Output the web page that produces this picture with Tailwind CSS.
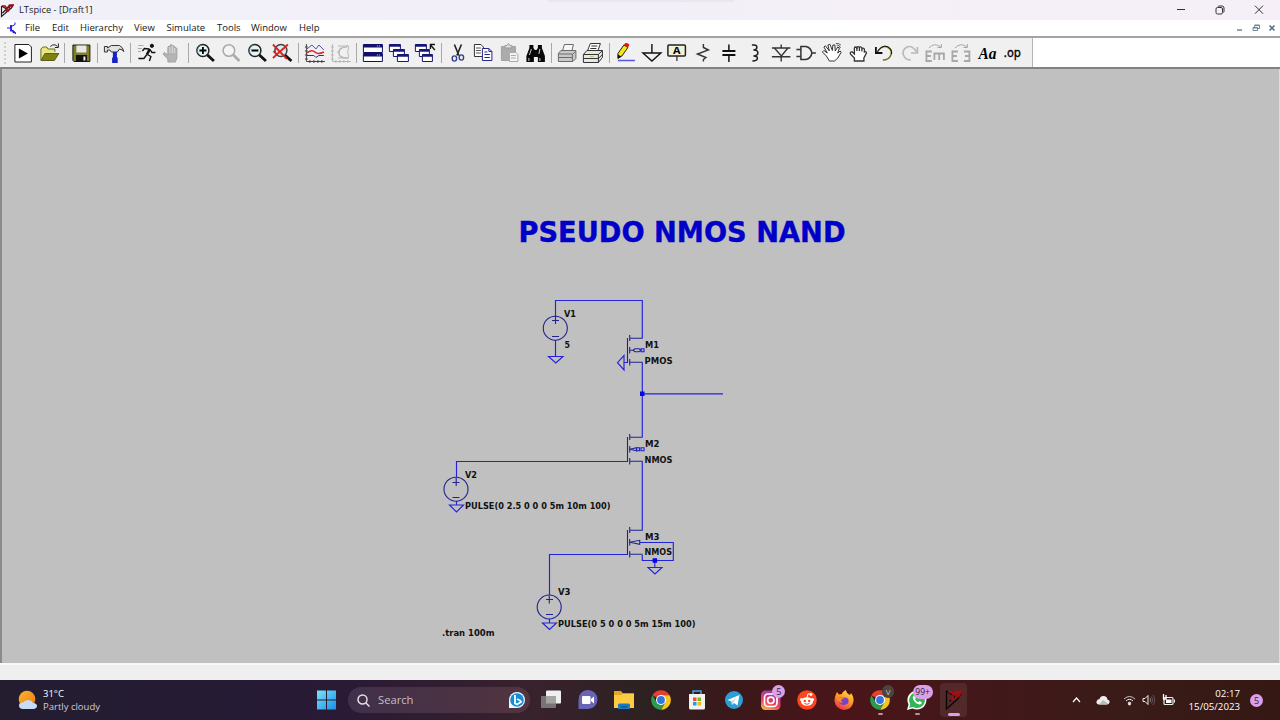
<!DOCTYPE html>
<html lang="en">
<head>
<meta charset="utf-8">
<title>LTspice - [Draft1]</title>
<script src="https://cdn.jsdelivr.net/npm/@tailwindcss/browser@4"></script>
</head>
<body class="w-[1280px] h-[720px] overflow-hidden flex flex-col bg-white text-black font-['Open_Sans','Noto_Sans',sans-serif]">

<!-- Title bar -->
<header class="h-5 shrink-0 flex items-center bg-linear-to-r from-[#f1f0f8] via-[#f3eff8] to-[#f6eff7] relative">
  <svg class="w-[15px] h-[16px] shrink-0" viewBox="0 0 15 16" fill="none"><path d="M1.500 4v10.500L11.500 6l1.500-3.500M1.500 4l5 3-4 4" stroke="#2b1719" stroke-width="1.200"/><path d="M2 4h3l2 2.500L9.500 3H14M7.500 6.500L6.500 9.500l2-.5L10 4h2.500L11 6.500" stroke="#8e101c" stroke-width="1.400"/></svg>
  <span class="ml-[4px] text-[9.300px] leading-4 text-[#1b1b1b] whitespace-nowrap w-[74px]">LTspice - [Draft1]</span>
  <div class="absolute left-[547px] top-0 w-[187px] h-[2px] bg-[#e7e7ec] rounded-b"></div>
  <div class="ml-auto flex items-center gap-[29px] mr-[16px]">
    <svg class="w-[10px] h-[10px]" viewBox="0 0 10 10"><path d="M1 4.500h8" stroke="#333" fill="none"/></svg>
    <svg class="w-[10px] h-[10px]" viewBox="0 0 10 10" fill="none" stroke="#333"><rect x="1" y="2.500" width="6.500" height="6.500" rx="1.500"/><path d="M3 1.500Q3 1 4 1h3q2 0 2 2v3.500q0 .8-.7 1"/></svg>
    <svg class="w-[10px] h-[10px]" viewBox="0 0 10 10"><path d="M1 .7l8 8M9 .7l-8 8" stroke="#333" fill="none"/></svg>
  </div>
</header>

<!-- Menu bar -->
<nav class="h-4 shrink-0 flex items-center bg-white text-[9.500px] leading-4 text-[#161616] whitespace-nowrap">
  <svg class="w-[11px] h-[13px] ml-[6px] mr-[8px]" viewBox="0 0 11 13" fill="none" stroke="#1717e8"><path d="M1 6h4M9 .500v2L5.500 4.500M9.500 12v-1.500L5.500 8"/><path d="M5 3v6.500" stroke-width="1.800"/><path d="M6.500 8l1 2.500h1.500" stroke-width="1.600"/></svg>
  <div class="flex -mt-px"><span class="w-[27px]">File</span><span class="w-[28px]">Edit</span><span class="w-[54px]">Hierarchy</span><span class="w-[32.500px]">View</span><span class="w-[50.500px]">Simulate</span><span class="w-[34px]">Tools</span><span class="w-[48px]">Window</span><span>Help</span></div>
  <div class="ml-auto mr-[4px] flex items-center gap-[8px]">
    <svg class="w-[8px] h-[8px]" viewBox="0 0 8 8"><path d="M1 6h5" stroke="#6f8494" stroke-width="1.500"/></svg>
    <svg class="w-[8px] h-[8px]" viewBox="0 0 8 8" fill="none" stroke="#6f8494"><path d="M2.500 3V1.500h5v3H6M2.500 1h5"/><path d="M1 3.500h4.500v3H1zM1 4h4.500"/></svg>
    <svg class="w-[8px] h-[8px]" viewBox="0 0 8 8"><path d="M1.500 1.500l5 5M6.500 1.500l-5 5" stroke="#5f7585" stroke-width="1.700"/></svg>
  </div>
</nav>

<!-- Toolbar -->
<div class="h-[33px] shrink-0 border-t-2 border-b-2 border-t-[#a3a3a3] border-b-[#828282] flex bg-white">
  <div class="w-[1033px] h-full flex items-center bg-[#f0f0f0] border-r border-[#b5b5b5] pl-[4px] [&>svg]:w-[25.800px] [&>svg]:h-[24px] [&>svg]:shrink-0 [&>i]:w-px [&>i]:h-[20px] [&>i]:bg-[#a9a9a9] [&>i]:mx-[2.900px] [&>i]:shrink-0">
    <div class="w-[2px] h-[22px] border-l-2 border-dotted border-[#cfcfcf] mr-[4px] shrink-0"></div>
    <!-- run -->
    <svg viewBox="0 0 24 24"><path d="M4 3.500h14l2.500 2.500v15H4z" fill="#fff" stroke="#222"/><path d="M8 7.500v10l9-5z" fill="#000"/></svg>
    <!-- open -->
    <svg viewBox="0 0 24 24"><path d="M4 19V8l2-2h4l1 2h7v3" fill="#e8e682" stroke="#6a6e22"/><path d="M4 19.500l4-7h14l-4.500 7z" fill="#7f8010" stroke="#5d5f18"/><path d="M13.500 5.500q4-3.500 7 0M21.500 2.500V6.500H18" fill="none" stroke="#222"/></svg>
    <i></i>
    <!-- save -->
    <svg viewBox="0 0 24 24"><path d="M4 4h17v16.500H5L4 19.500z" fill="#80802a" stroke="#1c1c08"/><path d="M7.500 4.500h10v7h-10z" fill="#e8e8e8"/><path d="M7 14h11v6.500H7z" fill="#111"/><path d="M14.500 15.500h2v4h-2z" fill="#eee"/></svg>
    <i></i>
    <!-- hammer -->
    <svg viewBox="0 0 24 24"><path d="M2.500 5.500h3v1.500l4-2.500h8q3.500 1.500 4.500 6-1.500-2-4.500-2.500l-2 3h-6L8 9H5.500v2h-3z" fill="#e2e2e2" stroke="#333"/><path d="M11 11h4v5l.8 1v5h-5.600v-5l.8-1z" fill="#1522c5"/></svg>
    <i></i>
    <!-- runner -->
    <svg viewBox="0 0 24 24" fill="none" stroke="#111"><circle cx="17" cy="4.800" r="1.600" fill="#111"/><path d="M15 8l-3 5.500" stroke-width="2.600"/><path d="M14.500 8L9.500 7.500 7.500 10M15.500 9l1.500 2.500h3.500M12.500 13.500l3.500 2-1.500 4.500M12 13.500l-3 4H3.500" stroke-width="1.400"/><path d="M3.500 4.500h5M3 7.500h4M3 10.500h3" stroke="#888" stroke-width=".7"/></svg>
    <!-- halt hand -->
    <svg viewBox="0 0 24 24"><path d="M8 21v-3l-5-5 1.500-1.500L8 14V6q1-2 2 0v-1.500q1.200-2 2.400 0V5q1.200-1.500 2.300.5V7q1.500-1.300 2.300.5v9L15.500 21z" fill="#b4b4b4" stroke="#a2a2a2"/><path d="M10 6v6M12.400 5v7M14.700 7v5" stroke="#eee" stroke-width=".7"/></svg>
    <i></i>
    <!-- zoom in -->
    <svg viewBox="0 0 24 24" fill="none"><circle cx="10" cy="9.500" r="6" fill="#e4f3f3" stroke="#222" stroke-width="1.500"/><path d="M5 12A6 6 0 0 1 8.500 4" stroke="#219b9b"/><path d="M14.500 14l6.500 6" stroke="#111" stroke-width="2.800"/><path d="M6.500 9.500h7M10 6v7" stroke="#000" stroke-width="1.800"/></svg>
    <!-- pan -->
    <svg viewBox="0 0 24 24" fill="none"><circle cx="10" cy="9.500" r="5.800" fill="#f4f4f4" stroke="#aaa" stroke-width="1.500"/><path d="M14.500 14l6 6" stroke="#aaa" stroke-width="2.600"/></svg>
    <!-- zoom out -->
    <svg viewBox="0 0 24 24" fill="none"><circle cx="10" cy="9.500" r="6" fill="#e4f3f3" stroke="#222" stroke-width="1.500"/><path d="M5 12A6 6 0 0 1 8.500 4" stroke="#219b9b"/><path d="M14.500 14l6.500 6" stroke="#111" stroke-width="2.800"/><path d="M6.500 9.500h7" stroke="#000" stroke-width="2"/></svg>
    <!-- zoom fit -->
    <svg viewBox="0 0 24 24" fill="none"><circle cx="11" cy="9.500" r="6" fill="#dcecec" stroke="#444" stroke-width="1.500"/><path d="M15 14l6.500 6" stroke="#111" stroke-width="2.800"/><path d="M3 3.500L17 18M18 3.500L3 17M3.500 10l4 4" stroke="#e02020" stroke-width="1.800"/></svg>
    <i></i>
    <!-- waveform -->
    <svg viewBox="0 0 24 24" fill="none"><path d="M3.500 3v17.500H22M2 6h3M2 10h3M2 14h3M2 18h3M7 19v3M11 19v3M15 19v3M19 19v3" stroke="#444"/><path d="M4 8l5-4 4 4 3-4 5 5" stroke="#5050b0"/><path d="M4 12q5-4 8-1t9 0" stroke="#e02030" stroke-width="1.500"/><path d="M4 14.500h7l2 2 3-2h5" stroke="#283090"/></svg>
    <svg viewBox="0 0 24 24" fill="none" stroke="#b8b8b8"><path d="M3.500 3v17.500H22M2 6h3M2 10h3M2 14h3M2 18h3M7 19v3M11 19v3M15 19v3M19 19v3M8 11h3M9 5h11M9 17h11M18 4l2 3-1 2v4l1 2-2 3"/><path d="M18 6q-8 0-8 5.500T18 17" stroke-width="1.500"/></svg>
    <i></i>
    <!-- tile -->
    <svg viewBox="0 0 24 24"><path d="M2.500 3.500h19v8h-19zM2.500 12.500h19v8h-19z" fill="#fff" stroke="#11116c"/><path d="M2.500 3.500h19v3h-19zM2.500 12.500h19v3h-19z" fill="#11116c"/><path d="M16 5h4M16 14h4" stroke="#ccc" stroke-dasharray="1"/></svg>
    <!-- cascade -->
    <svg viewBox="0 0 24 24" stroke="#171777"><g fill="#fff"><path d="M2.500 3.500h11v7h-11z"/><path d="M2.500 4.500h11" stroke-width="2.500"/><path d="M6.500 8.500h11v7h-11z"/><path d="M6.500 9.500h11" stroke-width="2.500"/><path d="M10.500 13.500h11v7h-11z"/><path d="M10.500 14.500h11" stroke-width="2.500"/></g></svg>
    <!-- close all -->
    <svg viewBox="0 0 24 24" stroke="#171777"><g fill="#fff"><path d="M2.500 3.500h11v7h-11z"/><path d="M2.500 4.500h11" stroke-width="2.500"/><path d="M6.500 8.500h10v7h-10z"/><path d="M6.500 9.500h10" stroke-width="2.500"/><path d="M9.500 13.500h10v7h-10z"/><path d="M9.500 14.500h10" stroke-width="2.500"/></g><path d="M22 9l-4.500-5M17.500 8V3.500H22" fill="none" stroke="#111" stroke-width="1.300"/></svg>
    <i></i>
    <!-- cut -->
    <svg viewBox="0 0 24 24" fill="none"><path d="M9.500 3.500l4.500 11M16.500 3.500l-4.500 11" stroke="#222" stroke-width="1.600"/><ellipse cx="9.500" cy="17.500" rx="2.200" ry="2.600" stroke="#33418f" stroke-width="1.400"/><ellipse cx="16.500" cy="16.500" rx="2.200" ry="2.600" stroke="#33418f" stroke-width="1.400"/></svg>
    <!-- copy -->
    <svg viewBox="0 0 24 24" fill="#fff"><path d="M3.500 3.500H10l2.500 2.500v9.500h-9z" stroke="#333"/><path d="M5 7h5M5 9.500h5M5 12h5" stroke="#555"/><path d="M11.500 7.500H18l3 3v9h-9.500z" stroke="#26268b"/><path d="M18 7.500v3h3M13.500 11h3M13.500 13.500h5.500M13.500 16.500h5.500" fill="none" stroke="#26268b"/></svg>
    <!-- paste -->
    <svg viewBox="0 0 24 24"><path d="M4.500 5.500h14v14h-14z" fill="#ababab" stroke="#a1a1a1"/><path d="M8 7V4.500h2l1.500-2 1.500 2h2V7z" fill="#ddd" stroke="#999"/><path d="M12.500 11.500h6.500l2 2v7h-8.500z" fill="#f4f4f4" stroke="#aaa"/><path d="M14 14.500h5M14 17h5" stroke="#aaa"/></svg>
    <!-- find -->
    <svg viewBox="0 0 24 24"><path d="M6.500 4h4v3l1.500 2h1.500L15 7V4h4v3l3 8v6h-7v-5h-4v5H3.500v-6l3-8z" fill="#080808"/><path d="M8.500 8l-2 6M17 8l-1 5M6 17v3M17 17v3" stroke="#ccc"/></svg>
    <i></i>
    <!-- print -->
    <svg viewBox="0 0 24 24" stroke="#6b6b6b"><path d="M7.500 10l2-6.500h9L17 10" fill="#f7f7f7"/><path d="M3.500 12.500L6 9.500h15v8l-3 3H3.500z" fill="#c9c9c9"/><path d="M3.500 13h14v7M18 13l3-3M4 16.500h13" fill="none"/></svg>
    <!-- print setup -->
    <svg viewBox="0 0 24 24" stroke="#333"><path d="M6.500 10l3-7.500h10L17 10" fill="#fff"/><path d="M10.500 5h6M9.500 7.500h6"/><path d="M2.500 13.500L6 9.500h15.500v7l-4 5h-15z" fill="#e7e7e7"/><path d="M2.500 13.500h15v8M17.500 13.500l4-4M2.500 17.500h15l4-4" fill="none"/><path d="M9 15.500h4" stroke="#c9c06a"/></svg>
    <i></i>
    <!-- wire pencil -->
    <svg viewBox="0 0 24 24"><path d="M4 12.500l6-8.500 4 2.500-6 8.500-4 2.500z" fill="#f6e611" stroke="#222"/><path d="M10 4l1.500-2q3-.5 4 2L14 6.500z" fill="#dc1717"/><path d="M4 13.500v4l3.500-2z" fill="#111"/><path d="M4 19.500h17" stroke="#5656e5" stroke-width="1.500"/></svg>
    <!-- ground -->
    <svg viewBox="0 0 24 24" fill="none" stroke="#111" stroke-width="1.400"><path d="M12 3v9M3 12h18L12 20z"/></svg>
    <!-- label -->
    <svg viewBox="0 0 24 24" fill="none"><rect x="3" y="4" width="17.500" height="11" rx="1" fill="#f3f2d6" stroke="#222" stroke-width="1.500"/><path d="M12 15v5" stroke="#333" stroke-width="1.300"/><text x="8" y="13.200" font-size="11" font-weight="700" font-family="Liberation Mono" fill="#000" textLength="7.500" lengthAdjust="spacingAndGlyphs">A</text></svg>
    <!-- resistor -->
    <svg viewBox="0 0 24 24" fill="none" stroke="#333" stroke-width="1.400"><path d="M12.500 3v3.500l5 2.500-11 4 8.500 3.500-2.500 2v2"/></svg>
    <!-- capacitor -->
    <svg viewBox="0 0 24 24" fill="none" stroke="#111"><path d="M12 3.500v7M12 14v7" stroke-width="1.500"/><path d="M5.500 10h13M5.500 14h13" stroke-width="1.800"/></svg>
    <!-- inductor -->
    <svg viewBox="0 0 24 24" fill="none" stroke="#222" stroke-width="1.500"><path d="M9 4q5-.5 5 2.200T10.500 9q4.500-.2 4.500 2.800T10.500 15q4-.2 4 2.300T9.500 20"/></svg>
    <!-- diode -->
    <svg viewBox="0 0 24 24" fill="none" stroke="#333" stroke-width="1.400"><path d="M3 7h18.500M5.500 7l7 8L19 7M3 15.800h18.500M12.300 3.500v4M12.300 16v4.500"/></svg>
    <!-- component gate -->
    <svg viewBox="0 0 24 24" fill="none" stroke="#333" stroke-width="1.500"><path d="M7 5.500h5q5 1 6 6.500-1 5.500-6 6.500H7zM2.500 8.500H7M2.500 15.500H7M18 12h4"/></svg>
    <!-- move -->
    <svg viewBox="0 0 24 24" fill="#fff" stroke="#333"><path d="M9.500 20l-3-5-4-4 1.500-1.500L7.500 12 4 6l1.500-1.200L9.500 10 8 4l2-.7 2.500 6.200L13 4l2 0 .3 6 2.500-4 1.700 1-1.700 5 2.500-2 1 1.200-3.500 6L14.500 20z"/><path d="M17 4q3 0 3.500 3M16 2.500q3-.5 5 1.500" fill="none" stroke-width=".8"/></svg>
    <!-- drag -->
    <svg viewBox="0 0 24 24" fill="#fff" stroke="#333" stroke-width="1.300"><path d="M8.500 20v-3l-4-4q-.5-2.500 2-2l2 2V7q1-2 2.500 0 .5-2.500 2.500-.5 2-1.500 2.500 1 2-1 2.500 1v2.500q2-1 2 1L18 17v3z"/><path d="M11 7v3M13.500 7v3M16 8v2.500" fill="none"/></svg>
    <!-- undo -->
    <svg viewBox="0 0 24 24" fill="none"><path d="M5.500 11Q10 4 15.500 6q5.500 3 3.500 8-2 5-8 5" stroke="#716f18" stroke-width="1.500"/><path d="M5.500 10.500Q10 4 15.500 5.500q5 2.500 4 7.500" stroke="#111"/><path d="M4 6v6h6.500" stroke="#111" stroke-width="1.800"/></svg>
    <!-- redo -->
    <svg viewBox="0 0 24 24" fill="none" stroke="#b9b9b9"><path d="M18.500 11Q14.500 4 9 6q-5 3-3.500 8 2 5 7.500 5" stroke-width="1.600"/><path d="M19.500 6v6H13" stroke-width="1.700"/></svg>
    <!-- rotate -->
    <svg viewBox="0 0 24 24" fill="none" stroke="#a8a8a8"><path d="M9 10.500H3.500v9.500H9M3.500 15H8M11.500 19v-6.500h9.500V19M16.300 12.500V19" stroke-width="1.800"/><path d="M6 7q5-6 12-1M18.500 3V6.500h-4"/></svg>
    <!-- mirror -->
    <svg viewBox="0 0 24 24" fill="none" stroke="#a8a8a8"><path d="M9 10.500H3.500v9.500H9M3.500 15H8M15 10.500h5.500v9.500H15M20.500 15H16" stroke-width="1.800"/><path d="M6 7q6-6 12-1M18.500 3V6.500h-4"/></svg>
    <svg viewBox="0 0 24 24"><text x="3.500" y="18" font-family="Liberation Serif" font-style="italic" font-weight="700" font-size="16" textLength="18" lengthAdjust="spacingAndGlyphs">Aa</text></svg>
    <svg class="overflow-visible" viewBox="0 0 24 24"><text x="2.500" y="15.500" font-family="DejaVu Sans" font-weight="400" font-size="12.500" stroke="#000" stroke-width=".35" textLength="17.500" lengthAdjust="spacingAndGlyphs">.op</text></svg>
  </div>
</div>

<!-- Schematic sheet -->
<main class="h-[594px] shrink-0 bg-[#c0c0c0] border-l-2 border-[#8b8b8b] border-r border-r-[#dedede]">
  <svg class="block w-[1277px] h-[594px]" viewBox="2 69 1277 594" fill="none" font-family="'DejaVu Sans',sans-serif" font-weight="700">
    <text x="518.500" y="241.500" font-size="29" fill="#0000c8" stroke="#0000c8" stroke-width=".4" textLength="327" lengthAdjust="spacingAndGlyphs">PSEUDO NMOS NAND</text>
    <g stroke="#2323dc" stroke-width="1.150">
      <path d="M555.500 316V300.500H642.300V338M642.300 362.500V437M642.300 393.800H723M642.300 461.500V530M627 461.500H456.500V477M627 554.500H549.500V595M640 542.500H673.300V560.500H642.300V555M654.800 560.500V567.500M555.500 340V356M456.500 501V505M549.500 619V623"/>
      <path d="M548.500 356.500h14.500l-7.200 6.500zM449.500 505h14l-7 7zM542.500 623h14l-7 6.500zM648 567.500h14l-7 6.500zM624 355.500v14.500l-6.500-7.300zM624 362.500h3.500"/>
    </g>
    <path d="M640 391.500h4.500v4.500H640zM652.600 558.300h4.500v4.500h-4.500z" fill="#0505ee"/>
    <g stroke="#22228f" stroke-width="1.100">
      <circle cx="555.300" cy="328.200" r="12"/><circle cx="456" cy="489.200" r="12"/><circle cx="549.200" cy="607" r="12"/>
      <path d="M552 320.500h7M555.500 316v8M552 336.500h7M452.500 482.500h7M456.200 478v8M452.500 497.500h7M546 599.500h7M549.300 595.500v8M546 614.500h7"/>
      <path id="fet" d="M627.500 338v25M629.700 335v6M629.700 347v6.500M629.700 359v6.500M629.700 338.300h13M629.700 362.300h13"/>
      <use href="#fet" y="99"/><use href="#fet" y="192"/>
      <path d="M629.700 350.300h3.300M633 350.300l2-1.500h4l2 1.500-2 1.500h-4zM629.700 449.300l7-1.500v3zM629.700 542.300l10-2v4z"/>
      <path d="M641 348.800h3v3h-3zM641 447.800h3v3h-3zM636.500 447.800h3v3h-3z" stroke="#1d1dd8"/>
    </g>
    <g fill="#111" font-size="9.300">
      <text x="564" y="317" textLength="12" lengthAdjust="spacingAndGlyphs">V1</text>
      <text x="564.500" y="347.700" textLength="5.500" lengthAdjust="spacingAndGlyphs">5</text>
      <text x="645" y="347.700" textLength="14" lengthAdjust="spacingAndGlyphs">M1</text>
      <text x="644.500" y="363.500" textLength="28" lengthAdjust="spacingAndGlyphs">PMOS</text>
      <text x="645" y="447" textLength="14.500" lengthAdjust="spacingAndGlyphs">M2</text>
      <text x="644.500" y="462.800" textLength="28" lengthAdjust="spacingAndGlyphs">NMOS</text>
      <text x="645" y="540" textLength="14.500" lengthAdjust="spacingAndGlyphs">M3</text>
      <text x="644.500" y="555.300" textLength="27.500" lengthAdjust="spacingAndGlyphs">NMOS</text>
      <text x="465" y="478" textLength="12" lengthAdjust="spacingAndGlyphs">V2</text>
      <text x="465" y="508.800" textLength="145.500" lengthAdjust="spacingAndGlyphs">PULSE(0 2.5 0 0 0 5m 10m 100)</text>
      <text x="558" y="595.300" textLength="12.500" lengthAdjust="spacingAndGlyphs">V3</text>
      <text x="558" y="627" textLength="137.500" lengthAdjust="spacingAndGlyphs">PULSE(0 5 0 0 0 5m 15m 100)</text>
      <text x="442" y="636" textLength="52.500" lengthAdjust="spacingAndGlyphs">.tran 100m</text>
    </g>
  </svg>
</main>
<div class="h-[17px] shrink-0 bg-[#efefef] border-t-2 border-[#f8f8f8]"></div>

<!-- Taskbar -->
<footer class="h-10 shrink-0 flex items-center text-white bg-[linear-gradient(90deg,#241d30_0%,#251b34_18%,#2a1a35_27%,#38222c_42%,#2d2122_50%,#3b181a_57%,#4a1519_66%,#42181a_77%,#391b17_88%,#351714_100%)]">
  <div class="flex items-center w-[315px] shrink-0 pl-[17px]">
    <svg class="w-[21px] h-[21px]" viewBox="0 0 21 21"><defs><linearGradient id="sun" x1="0" y1="0" x2="1" y2="1"><stop stop-color="#f9b32d"/><stop offset="1" stop-color="#ee7d16"/></linearGradient></defs><circle cx="10" cy="9" r="8.300" fill="url(#sun)"/><path d="M6 19q-4-.2-4-3.500T6 12.500Q8 9.500 12 10q3 .5 4 3 4 .3 4 3t-4 3z" fill="#c8dbf8"/></svg>
    <div class="ml-[5px] text-[9.500px] leading-[13px] whitespace-nowrap"><div>31°C</div><div class="text-[#d0cad6]">Partly cloudy</div></div>
  </div>
  <svg class="w-[21px] h-[20px] ml-px shrink-0" viewBox="0 0 21 20"><defs><linearGradient id="win" x1="0" y1="0" x2="1" y2="1"><stop stop-color="#7be3fb"/><stop offset="1" stop-color="#168fe8"/></linearGradient></defs><path d="M1 .500h9v9H1zM11 .500h9v9h-9zM1 10.500h9v9H1zM11 10.500h9v9h-9z" fill="url(#win)"/></svg>
  <div class="ml-[11px] w-[182px] h-[26px] shrink-0 rounded-full bg-linear-to-r from-[#40304a] to-[#52343f] flex items-center pl-[9px] pr-[4px]">
    <svg class="w-[13px] h-[13px]" viewBox="0 0 13 13" fill="none" stroke="#e6dfe8" stroke-width="1.500"><circle cx="5.500" cy="5.500" r="4.500"/><path d="M9 9l3.500 3.500"/></svg>
    <span class="ml-[8px] text-[11.200px] text-[#c9bdcb] w-[35px]">Search</span>
    <svg class="ml-auto w-[18px] h-[18px]" viewBox="0 0 18 18"><path d="M1 17V9a8 8 0 1 1 8 8z" fill="#e9f7ff"/><circle cx="9" cy="9" r="6.800" fill="#168bd9"/><path d="M7 4v8.500l2 1 4-2.500q0-1.500-4-3" fill="none" stroke="#fff" stroke-width="1.800"/></svg>
  </div>
  <div class="flex h-full items-center ml-[2.700px] [&>div]:w-[36.600px] [&>div]:h-full [&>div]:flex [&>div]:items-center [&>div]:justify-center [&>div]:relative [&>div>svg]:w-[22px] [&>div>svg]:h-[22px]">
    <div><svg viewBox="0 0 22 22"><rect x="6" y="1.500" width="15" height="13" rx="1" fill="#efefef"/><rect x="1" y="7" width="15" height="12" rx="1" fill="#777475"/><path d="M6 7h10v7.500H6z" fill="#a4a4a3"/></svg></div>
    <div><svg viewBox="0 0 22 22"><path d="M1.500 20V11A9.500 9.500 0 1 1 11 20z" fill="#6864b9"/><rect x="5" y="7" width="8.500" height="8" rx="1" fill="#fff"/><path d="M14 10l3-2.500v7L14 12z" fill="#fff"/></svg></div>
    <div><svg viewBox="0 0 22 22"><path d="M1 2h7l2 2.500h11V19H1z" fill="#e3a61f"/><path d="M1 6h7l2-1.500h11V19H1z" fill="#fccb42"/><path d="M5 20v-4q0-1.500 1.500-1.500h9q1.500 0 1.500 1.500v4z" fill="#177ac6"/><path d="M8 17h6v1.500H8z" fill="#0d5894"/></svg></div>
    <div><svg viewBox="0 0 22 22"><g id="chrome"><path d="M11 11L2.500 6.200A9.800 9.800 0 0 1 19.600 6.200H11z" fill="#e44131"/><path d="M11 11V6.200h8.600A9.800 9.800 0 0 1 11 20.800L15.200 13.400z" fill="#f8c520"/><path d="M11 20.800A9.800 9.800 0 0 1 2.500 6.200l4.300 7.200 8.400 0z" fill="#2d9b4c"/><circle cx="11" cy="11" r="5" fill="#fff"/><circle cx="11" cy="11" r="3.900" fill="#3177e3"/></g></svg></div>
    <div><svg viewBox="0 0 22 22"><path d="M7 5V2h8v3" fill="none" stroke="#3bade5" stroke-width="1.400"/><path d="M3 5h16v14q0 1.500-1.500 1.500h-13Q3 20.500 3 19z" fill="#f1f1f1"/><path d="M7 8.500h3.500V12H7z" fill="#ef5125"/><path d="M11.500 8.500H15V12h-3.500z" fill="#7cb71a"/><path d="M7 13h3.500v3.500H7z" fill="#1aa2e5"/><path d="M11.500 13H15v3.500h-3.500z" fill="#f4b615"/></svg></div>
    <div><svg viewBox="0 0 22 22"><circle cx="11" cy="11" r="9" fill="#2b9fd5"/><path d="M4.500 11L16.500 6l-2 10.500-3.500-2.500-2 2-.5-3.500z" fill="#fff"/><path d="M8.500 12.500L14 8.500l-4 5-1 2.500z" fill="#b9d8ec"/></svg></div>
    <div><svg viewBox="0 0 22 22"><defs><linearGradient id="ig" x1=".2" y1="1" x2=".6" y2="0"><stop stop-color="#fbb947"/><stop offset=".4" stop-color="#ed3e58"/><stop offset="1" stop-color="#8c3fbe"/></linearGradient></defs><rect x="1" y="1.500" width="19.500" height="19.500" rx="4.500" fill="url(#ig)"/><g fill="none" stroke="#fff" stroke-width="1.700"><rect x="4.500" y="5" width="12.500" height="12.500" rx="3.500"/><circle cx="10.800" cy="11.300" r="3.200"/></g></svg><span class="absolute left-[20px] top-[5px] w-[13px] h-[13px] rounded-full bg-[#dba0e6] text-[#33203b] text-[9px] leading-[13px] text-center">5</span></div>
    <div><svg viewBox="0 0 22 22"><circle cx="11" cy="11" r="9.800" fill="#fc471e"/><ellipse cx="11" cy="12.500" rx="6" ry="4.300" fill="#fff"/><circle cx="5.500" cy="10.500" r="1.600" fill="#fff"/><circle cx="16.500" cy="10.500" r="1.600" fill="#fff"/><path d="M11 8.500l1-3.700 3 .7" fill="none" stroke="#fff"/><circle cx="15" cy="5.500" r="1.400" fill="#fff"/><circle cx="8.800" cy="12" r="1.200" fill="#fc471e"/><circle cx="13.200" cy="12" r="1.200" fill="#fc471e"/><path d="M8.500 14.500q2.500 1.500 5 0" fill="none" stroke="#fc471e"/></svg></div>
    <div><svg viewBox="0 0 22 22"><defs><linearGradient id="ff" x1=".8" y1="0" x2=".3" y2="1"><stop stop-color="#ffe045"/><stop offset=".5" stop-color="#ff9426"/><stop offset="1" stop-color="#ef2d53"/></linearGradient></defs><path d="M3 5l1-2 2 2.500 3-.5Q9 3 13 1q0 3 4 5l1-2q3 4 2.500 8.500Q19 20.500 11 21 2.500 20 1.500 12 1.500 8 3 5z" fill="url(#ff)"/><path d="M7 8l4 1-2 2q1 3 5 1 0 4-4 4-4.500-1-4-5.500z" fill="#7b43c5"/><circle cx="12" cy="12" r="3.600" fill="#7544cb"/><path d="M4 10q3-3 7-1l-3 2q0 2 2 3-4 0-6-4z" fill="#ff8c25"/></svg></div>
    <div><svg viewBox="0 0 22 22"><use href="#chrome"/></svg><span class="absolute left-[20px] top-[5px] w-[12px] h-[13px] rounded-full bg-[#4b4440] text-[#cdc6bd] text-[8px] leading-[13px] text-center">V</span><span class="absolute left-[16px] bottom-[5px] w-[5px] h-[2px] rounded bg-[#a9989d]"></span></div>
    <div><svg viewBox="0 0 22 22"><path d="M1 21l1.500-5.500a9.500 9.500 0 1 1 4 4z" fill="#fff"/><path d="M3.200 18.800l1-3.600A7.900 7.900 0 1 1 7 18z" fill="#32b756"/><path d="M8 6.500q-2 1.500-.5 4.500 2.500 4 6 4.500 2 0 2.500-2l-2.500-1.500-1.500 1.200q-2-.8-3-3l1-1.200z" fill="#fff"/></svg><span class="absolute left-[14px] top-[5px] w-[20px] h-[14px] rounded-full bg-[#dba0e6] text-[#33203b] text-[8.500px] leading-[14px] text-center">99+</span><span class="absolute left-[16px] bottom-[5px] w-[5px] h-[2px] rounded bg-[#a9989d]"></span></div>
    <div><span class="absolute left-[5px] top-[3px] w-[27px] h-[34px] rounded-[4px] bg-white/8"></span><svg class="relative" viewBox="0 0 22 22" fill="none"><path d="M3.500 1.500v18.500L15 9.500l3.500-6M3.500 2l8.500 5.500-5.500 5" stroke="#0b0606" stroke-width="1.400"/><path d="M5.500 3h3l2 3 3-3.500h6M10.500 7L9 10.500l3-.5 2.500-6h3L15 8" stroke="#a60d15" stroke-width="1.800"/></svg><span class="absolute left-[13px] bottom-[4px] w-[12px] h-[3px] rounded bg-[#dba0e6]"></span></div>
  </div>
  <div class="ml-auto flex items-center shrink-0 pr-[17px]">
    <svg class="w-[9px] h-[8px]" viewBox="0 0 9 8"><path d="M1 6l3.500-4L8 6" fill="none" stroke="#fff" stroke-width="1.200"/></svg>
    <svg class="w-[14px] h-[10px] ml-[15px]" viewBox="0 0 14 10"><path d="M3 9.500Q0 9 .5 6.500T3.500 4Q4.500.500 8 1t3.300 3.500Q14 5 13.500 7.500 13 9.500 11 9.500z" fill="#ededed"/><path d="M3 9.500L7 5l5 3.500q-1 1-2 1z" fill="#bbb"/></svg>
    <svg class="w-[13px] h-[12px] ml-[13px]" viewBox="0 0 13 12" fill="none" stroke="#eee"><path d="M1 5q5.500-5 11 0" stroke="#cbc4c3"/><path d="M3 7q3.500-3.500 7 0M4.800 9q1.700-1.700 3.400 0"/><circle cx="6.500" cy="10" r="1" fill="#fff"/></svg>
    <svg class="w-[13px] h-[12px] ml-[6px]" viewBox="0 0 13 12" fill="none" stroke="#eee"><path d="M1 4.500h2l3-3v9l-3-3H1z"/><path d="M8 4q1.500 2 0 4" stroke="#887777"/><path d="M9.500 2.500q2.500 3.500 0 7M11 1q3.500 5 0 10" stroke="#685555"/></svg>
    <svg class="w-[13px] h-[12px] ml-[7px]" viewBox="0 0 13 12"><rect x="2" y="3.500" width="9" height="7" rx="1" fill="none" stroke="#eee" stroke-width="1.200"/><rect x="4" y="5.500" width="5.500" height="3.500" fill="#fff"/><path d="M12.500 5.500v3" stroke="#eee"/><path d="M1.500 0v5M4 1v4H1" stroke="#fff" stroke-width="1.300" fill="none"/></svg>
    <div class="ml-[11px] w-[54px] text-[9.700px] leading-[13.500px] text-right whitespace-nowrap"><div>02:17</div><div>15/05/2023</div></div>
    <span class="ml-[10px] w-[13px] h-[13px] rounded-full bg-[#dba0e6] text-[#33203b] text-[9px] leading-[13px] text-center">5</span>
  </div>
</footer>
</body>
</html>
